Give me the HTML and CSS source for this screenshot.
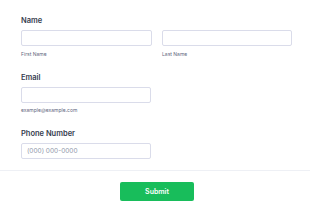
FILE: index.html
```html
<!DOCTYPE html>
<html lang="en">
<head>
  <meta charset="UTF-8">
  <meta name="viewport" content="width=device-width, initial-scale=1.0">
  <title>Contact Form</title>
  <link rel="stylesheet" href="styles.css">
</head>
<body>
  <form class="form">
    <div class="fields">
      <div class="field">
        <label class="form-label">Name</label>
        <div class="name-row">
          <div>
            <input type="text" class="form-control">
            <div class="sub-label">First Name</div>
          </div>
          <div>
            <input type="text" class="form-control">
            <div class="sub-label">Last Name</div>
          </div>
        </div>
      </div>

      <div class="field">
        <label class="form-label">Email</label>
        <div class="half">
          <input type="email" class="form-control">
          <div class="sub-label">example@example.com</div>
        </div>
      </div>

      <div class="field">
        <label class="form-label">Phone Number</label>
        <div class="half">
          <input type="tel" class="form-control" placeholder="(000) 000-0000">
        </div>
      </div>
    </div>

    <div class="form-footer">
      <button type="submit" class="btn-submit">Submit</button>
    </div>
  </form>
</body>
</html>
```

FILE: styles.css
```css
* {
  margin: 0;
  padding: 0;
  box-sizing: border-box;
}

body {
  font-family: 'Inter', 'Liberation Sans', sans-serif;
  background: #ffffff;
  color: #2c3345;
}

.fields {
  display: flex;
  flex-direction: column;
  gap: 15px;
  padding: 16px 18px 11px 21px;
  border-bottom: 1px solid #eef0f5;
}

.form-label {
  display: block;
  font-size: 7.5px;
  line-height: 9px;
  font-weight: 600;
  color: #353c4e;
  margin-bottom: 5px;
}

.name-row {
  display: grid;
  grid-template-columns: 131px 130px;
  gap: 10px;
}

.half {
  width: 130px;
}

.form-control {
  display: block;
  width: 100%;
  height: 16px;
  padding: 0 5px;
  border: 1px solid #dadcea;
  border-radius: 2px;
  font-family: inherit;
  font-size: 6.5px;
  color: #2c3345;
  background: #ffffff;
  outline: none;
}

.form-control::placeholder {
  color: #9097aa;
}

.sub-label {
  font-size: 5px;
  line-height: 7px;
  color: #5f6880;
  margin-top: 4.5px;
}

.form-footer {
  display: flex;
  justify-content: center;
  padding: 11px 0 0 4px;
}

.btn-submit {
  width: 74px;
  height: 19px;
  border: none;
  border-radius: 2px;
  background: #18bd5b;
  color: #ffffff;
  font-family: inherit;
  font-size: 7px;
  font-weight: 600;
  cursor: pointer;
}
```
